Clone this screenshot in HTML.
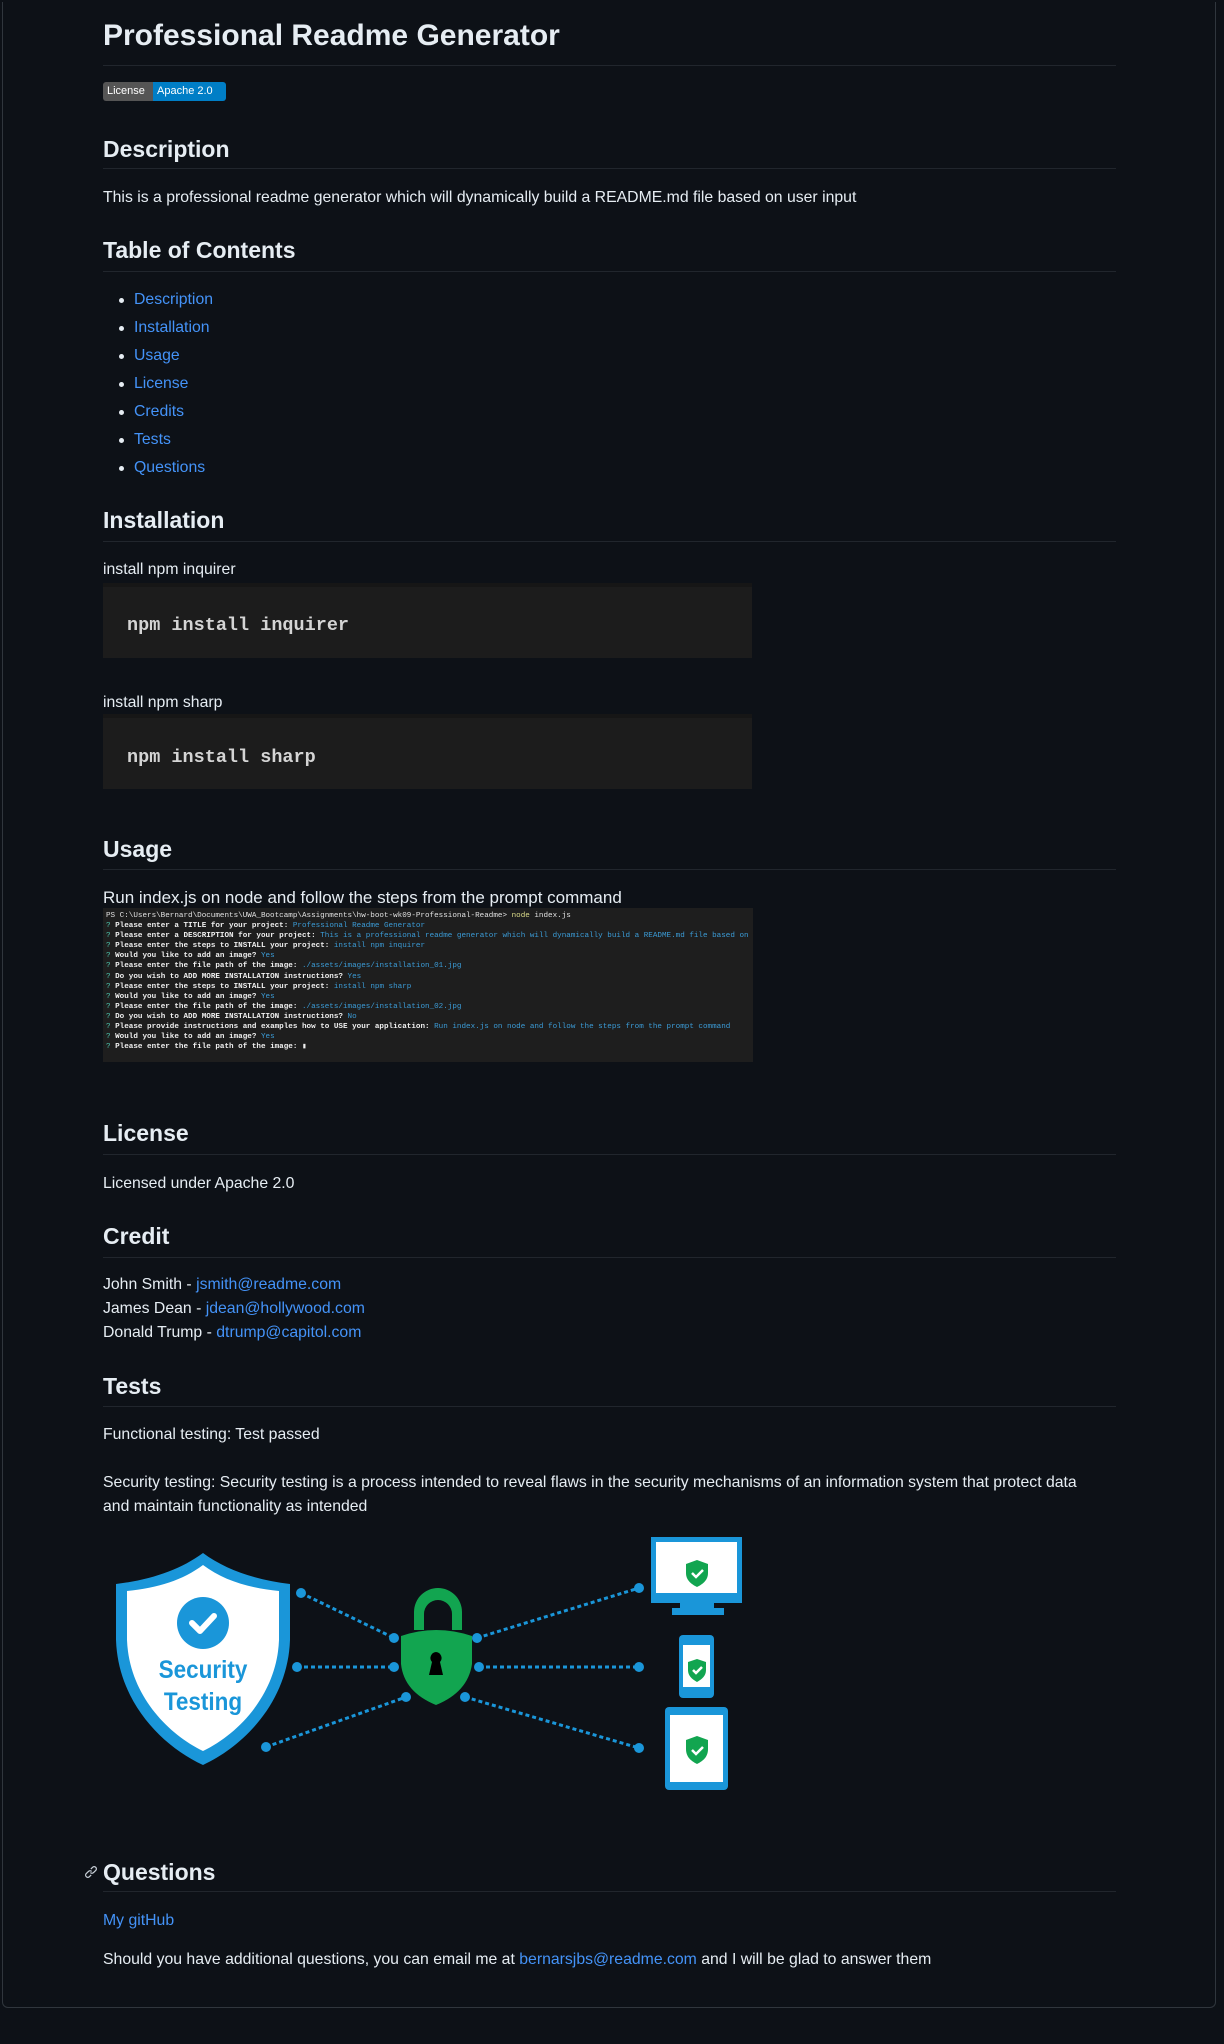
<!DOCTYPE html>
<html><head><meta charset="utf-8"><style>
*{margin:0;padding:0;box-sizing:border-box}
html,body{width:1224px;height:2044px;background:#0d1117;overflow:hidden}
body{position:relative;font-family:"Liberation Sans",Arial,sans-serif;color:#e6edf3;font-size:15.8px}
.box{position:absolute;left:2px;top:2px;width:1214px;height:2006px;border:1px solid #30363d;border-top:none;border-radius:0 0 6px 6px}
.t{position:absolute;left:103px;white-space:nowrap;line-height:24px}
.h2{font-size:23px;font-weight:bold;line-height:30px}
.hr{position:absolute;left:103px;width:1013px;height:1px;background:#21262d}
a{color:#4493f8;text-decoration:none}
.li{position:absolute;left:134px;line-height:24px}
.li:before{content:"";position:absolute;left:-15px;top:10px;width:5px;height:5px;border-radius:50%;background:#e6edf3}
.code{position:absolute;left:103px;width:649px;background:#1c1c1c;border-top:4px solid #161616}
.code span{position:absolute;left:24px;font-family:"Liberation Mono",monospace;font-weight:bold;font-size:18.5px;color:#d4d4d4;line-height:24px}
.term{position:absolute;left:103px;top:908px;width:650px;height:154px;background:#1e1e1e;font-family:"Liberation Mono",monospace;font-size:7.6px;line-height:10.1px;color:#e0e0e0;padding:3px 0 0 3px;white-space:pre;overflow:hidden}
.term b{font-weight:bold;color:#f0f0f0}
.c{color:#3b9bd6}.g{color:#4ec9b0}.y{color:#dcdc8a}
</style></head><body>
<div class="box"></div>
<div class="t" style="top:17px;font-size:30px;font-weight:bold;line-height:38px">Professional Readme Generator</div>
<div class="hr" style="top:65px"></div>
<div style="position:absolute;left:103px;top:82px;width:123px;height:19px;border-radius:3px;overflow:hidden;font-size:11px;line-height:19px;color:#fff">
<span style="position:absolute;left:0;top:0;width:50px;height:19px;background:#555;padding-left:4px">License</span>
<span style="position:absolute;left:50px;top:0;width:73px;height:19px;background:#007ec6;padding-left:4px">Apache 2.0</span></div>
<div class="t h2" style="top:134px">Description</div>
<div class="hr" style="top:168px"></div>
<div class="t" style="top:186px">This is a professional readme generator which will dynamically build a README.md file based on user input</div>
<div class="t h2" style="top:235px">Table of Contents</div>
<div class="hr" style="top:271px"></div>
<div class="li" style="top:288px"><a>Description</a></div>
<div class="li" style="top:316px"><a>Installation</a></div>
<div class="li" style="top:344px"><a>Usage</a></div>
<div class="li" style="top:372px"><a>License</a></div>
<div class="li" style="top:400px"><a>Credits</a></div>
<div class="li" style="top:428px"><a>Tests</a></div>
<div class="li" style="top:456px"><a>Questions</a></div>
<div class="t h2" style="top:505px">Installation</div>
<div class="hr" style="top:541px"></div>
<div class="t" style="top:558px">install npm inquirer</div>
<div class="code" style="top:583px;height:75px"><span style="top:27px">npm install inquirer</span></div>
<div class="t" style="top:691px">install npm sharp</div>
<div class="code" style="top:714px;height:75px"><span style="top:28px">npm install sharp</span></div>
<div class="t h2" style="top:834px">Usage</div>
<div class="hr" style="top:869px"></div>
<div class="t" style="top:886px;font-size:17px">Run index.js on node and follow the steps from the prompt command</div>
<div class="term">PS C:\Users\Bernard\Documents\UWA_Bootcamp\Assignments\hw-boot-wk09-Professional-Readme> <span class="y">node</span> index.js
<span class="g">?</span> <b>Please enter a TITLE for your project:</b> <span class="c">Professional Readme Generator</span>
<span class="g">?</span> <b>Please enter a DESCRIPTION for your project:</b> <span class="c">This is a professional readme generator which will dynamically build a README.md file based on user input</span>
<span class="g">?</span> <b>Please enter the steps to INSTALL your project:</b> <span class="c">install npm inquirer</span>
<span class="g">?</span> <b>Would you like to add an image?</b> <span class="c">Yes</span>
<span class="g">?</span> <b>Please enter the file path of the image:</b> <span class="c">./assets/images/installation_01.jpg</span>
<span class="g">?</span> <b>Do you wish to ADD MORE INSTALLATION instructions?</b> <span class="c">Yes</span>
<span class="g">?</span> <b>Please enter the steps to INSTALL your project:</b> <span class="c">install npm sharp</span>
<span class="g">?</span> <b>Would you like to add an image?</b> <span class="c">Yes</span>
<span class="g">?</span> <b>Please enter the file path of the image:</b> <span class="c">./assets/images/installation_02.jpg</span>
<span class="g">?</span> <b>Do you wish to ADD MORE INSTALLATION instructions?</b> <span class="c">No</span>
<span class="g">?</span> <b>Please provide instructions and examples how to USE your application:</b> <span class="c">Run index.js on node and follow the steps from the prompt command</span>
<span class="g">?</span> <b>Would you like to add an image?</b> <span class="c">Yes</span>
<span class="g">?</span> <b>Please enter the file path of the image:</b> <b>&#9646;</b></div>
<div class="t h2" style="top:1118px">License</div>
<div class="hr" style="top:1154px"></div>
<div class="t" style="top:1172px">Licensed under Apache 2.0</div>
<div class="t h2" style="top:1221px">Credit</div>
<div class="hr" style="top:1257px"></div>
<div class="t" style="top:1273px">John Smith - <a>jsmith@readme.com</a></div>
<div class="t" style="top:1297px">James Dean - <a>jdean@hollywood.com</a></div>
<div class="t" style="top:1321px">Donald Trump - <a>dtrump@capitol.com</a></div>
<div class="t h2" style="top:1371px">Tests</div>
<div class="hr" style="top:1406px"></div>
<div class="t" style="top:1423px">Functional testing: Test passed</div>
<div class="t" style="top:1471px">Security testing: Security testing is a process intended to reveal flaws in the security mechanisms of an information system that protect data</div>
<div class="t" style="top:1495px">and maintain functionality as intended</div>
<svg style="position:absolute;left:0;top:0" width="1224" height="2044">
<g fill="#1a96d9">
<path d="M203 1553 C180 1570 150 1580 116 1584 L116 1640 C118 1700 160 1745 203 1765 C246 1745 288 1700 290 1640 L290 1584 C256 1580 226 1570 203 1553Z"/>
</g>
<path d="M203 1565 C183 1580 158 1588 127 1591 L127 1640 C129 1693 166 1733 203 1751 C240 1733 277 1693 279 1640 L279 1591 C248 1588 223 1580 203 1565Z" fill="#fff"/>
<circle cx="203" cy="1623" r="26" fill="#1a96d9"/>
<path d="M192 1623 l8 8 l14 -15" stroke="#fff" stroke-width="6" fill="none" stroke-linecap="round" stroke-linejoin="round"/>
<text x="203" y="1678" text-anchor="middle" font-family="Liberation Sans" font-weight="bold" font-size="25" fill="#1a96d9" transform="translate(203 0) scale(0.9 1) translate(-203 0)">Security</text>
<text x="203" y="1710" text-anchor="middle" font-family="Liberation Sans" font-weight="bold" font-size="25" fill="#1a96d9" transform="translate(203 0) scale(0.9 1) translate(-203 0)">Testing</text>
<g stroke="#1a96d9" stroke-width="3" stroke-dasharray="4 3">
<line x1="301" y1="1593" x2="394" y2="1638"/><line x1="297" y1="1667" x2="394" y2="1667"/><line x1="266" y1="1747" x2="406" y2="1697"/>
<line x1="477" y1="1638" x2="639" y2="1588"/><line x1="479" y1="1667" x2="639" y2="1667"/><line x1="465" y1="1697" x2="639" y2="1748"/>
</g>
<g fill="#1a96d9">
<circle cx="301" cy="1593" r="5"/><circle cx="297" cy="1667" r="5"/><circle cx="266" cy="1747" r="5"/>
<circle cx="394" cy="1638" r="5"/><circle cx="394" cy="1667" r="5"/><circle cx="406" cy="1697" r="5"/>
<circle cx="477" cy="1638" r="5"/><circle cx="479" cy="1667" r="5"/><circle cx="465" cy="1697" r="5"/>
<circle cx="639" cy="1588" r="5"/><circle cx="639" cy="1667" r="5"/><circle cx="639" cy="1748" r="5"/>
</g>
<path d="M414 1630 L414 1612 A24 24 0 0 1 462 1612 L462 1630 L452 1630 L452 1614 A14 14 0 0 0 424 1614 L424 1630Z" fill="#12a550"/>
<path d="M401 1636 Q436 1624 472 1636 L472 1664 Q468 1692 436 1705 Q404 1692 401 1664Z" fill="#12a550"/>
<path d="M436 1652 a6 6 0 0 1 4 10 l3 13 h-14 l3 -13 a6 6 0 0 1 4 -10z" fill="#000"/>
<rect x="651" y="1537" width="91" height="66" fill="#1a96d9"/><rect x="656" y="1542" width="81" height="51" fill="#fff"/>
<rect x="680" y="1603" width="34" height="5" fill="#1a96d9"/><rect x="672" y="1608" width="52" height="7" fill="#1a96d9"/>
<rect x="679" y="1635" width="35" height="63" rx="4" fill="#1a96d9"/><rect x="683" y="1645" width="27" height="42" fill="#fff"/>
<rect x="665" y="1707" width="63" height="83" rx="4" fill="#1a96d9"/><rect x="670" y="1715" width="53" height="67" fill="#fff"/>
<g fill="#12a550">
<path d="M697 1560 l-11 4 v9 c0 7 5 11 11 14 c6 -3 11 -7 11 -14 v-9z"/>
<path d="M697 1659 l-9 3 v8 c0 6 4 9 9 12 c5 -3 9 -6 9 -12 v-8z"/>
<path d="M697 1736 l-11 4 v9 c0 8 5 12 11 15 c6 -3 11 -7 11 -15 v-9z"/>
</g>
<g stroke="#fff" stroke-width="2.5" fill="none"><path d="M692 1573 l4 4 l7 -7"/><path d="M693 1670 l3 3 l6 -6"/><path d="M692 1750 l4 4 l7 -7"/></g>
</svg>
<svg style="position:absolute;left:84px;top:1864px" width="14" height="16" viewBox="0 0 16 16"><path d="M7.8 4.6l2-2a2.5 2.5 0 0 1 3.6 3.6l-2.5 2.5a2.5 2.5 0 0 1-3.6 0M8.2 11.4l-2 2a2.5 2.5 0 0 1-3.6-3.6l2.5-2.5a2.5 2.5 0 0 1 3.6 0" stroke="#c9d1d9" stroke-width="1.4" fill="none"/></svg>
<div class="t h2" style="top:1857px">Questions</div>
<div class="hr" style="top:1891px"></div>
<div class="t" style="top:1909px"><a>My gitHub</a></div>
<div class="t" style="top:1948px">Should you have additional questions, you can email me at <a>bernarsjbs@readme.com</a> and I will be glad to answer them</div>
</body></html>
